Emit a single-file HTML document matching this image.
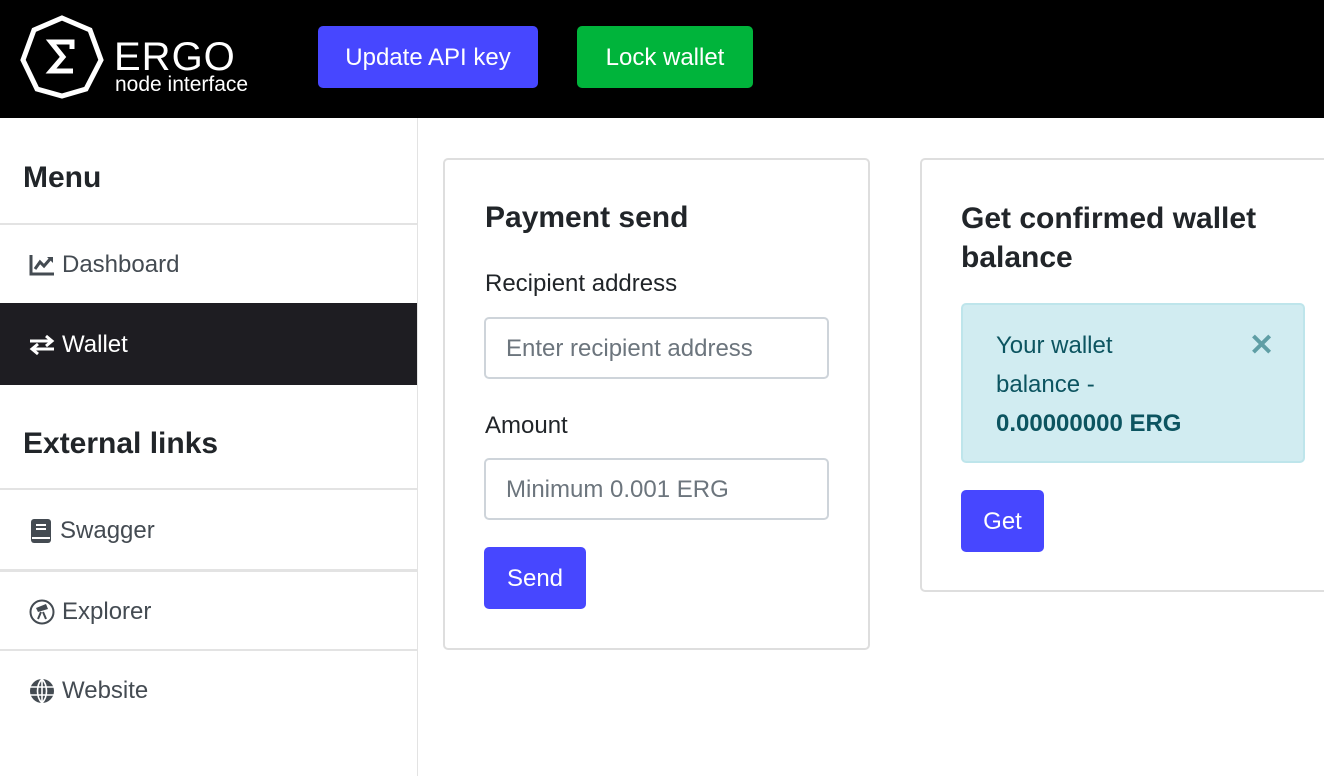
<!DOCTYPE html>
<html><head><meta charset="utf-8"><style>
*{box-sizing:border-box;margin:0;padding:0}
body{width:1324px;height:776px;overflow:hidden;background:#fff;font-family:"Liberation Sans",sans-serif;color:#212529;position:relative}
.a{position:absolute;white-space:nowrap}
.hdr{position:absolute;left:0;top:0;width:1324px;height:118px;background:#000}
.btn{position:absolute;color:#fff;font-size:24px;border-radius:5px;display:flex;align-items:center;justify-content:center;padding-top:2px}
.blue{background:#4747ff}
.side{position:absolute;left:0;top:118px;width:418px;height:658px;border-right:1px solid #e3e3e3}
.hr{position:absolute;left:0;width:417px;height:2px;background:#e3e3e3}
.nav{position:absolute;left:0;width:417px;font-size:24px;color:#444b52;display:flex;align-items:center;padding-left:28px;padding-top:2px}
.nav svg{margin-right:6px}
h2{position:absolute;font-size:30px;font-weight:bold;white-space:nowrap}
.card{position:absolute;border:2px solid #dedede;border-radius:5px}
.lbl{position:absolute;font-size:24px}
.inp{position:absolute;border:2px solid #ced4da;border-radius:5px;font-size:24px;color:#6c757d;padding-left:20px;display:flex;align-items:center;padding-top:2px}
</style></head><body>
<div class="hdr">
<svg class="a" style="left:20px;top:15px" width="84" height="84" viewBox="0 0 84 84"><polygon points="42,3 70,15 81,45 66,74 42,81 17,74 3,45 14,15" fill="none" stroke="#fff" stroke-width="5"/><path d="M52 34V27H31L43 42L31 56H53" fill="none" stroke="#fff" stroke-width="5" stroke-linejoin="miter"/></svg>
<div class="a" style="left:114px;top:35px;font-size:40px;color:#fff;letter-spacing:1px;line-height:44px">ERGO</div>
<div class="a" style="left:115px;top:73px;font-size:21px;color:#fff">node interface</div>
<div class="btn blue" style="left:318px;top:26px;width:220px;height:62px">Update API key</div>
<div class="btn" style="left:577px;top:26px;width:176px;height:62px;background:#00b43b">Lock wallet</div>
</div>
<div class="side">
<h2 style="left:23px;top:43px">Menu</h2>
<div class="hr" style="top:105px"></div>
<div class="nav" style="top:106px;height:79px"><svg width="28" height="24" viewBox="0 0 28 24"><path d="M3 2V21H26" fill="none" stroke="#444b52" stroke-width="3"/><path d="M7 16L12 9L16 13L23 5" fill="none" stroke="#444b52" stroke-width="3"/><path d="M19 4H25V10Z" fill="#444b52"/></svg>Dashboard</div>
<div class="nav" style="top:185px;height:82px;background:#1e1d22;color:#fff"><svg width="28" height="24" viewBox="0 0 28 24"><path d="M2 8H23M18 3L24 8L18 13M26 16H5M10 11L4 16L10 21" fill="none" stroke="#fff" stroke-width="3"/></svg>Wallet</div>
<h2 style="left:23px;top:309px">External links</h2>
<div class="hr" style="top:370px"></div>
<div class="nav" style="top:372px;height:79px"><svg width="26" height="28" viewBox="0 0 26 28"><rect x="3" y="2" width="20" height="24" rx="3" fill="#444b52"/><path d="M8 8H18M8 12H18M4 21H22" stroke="#fff" stroke-width="2"/></svg>Swagger</div>
<div class="hr" style="top:451px;height:3px"></div>
<div class="nav" style="top:454px;height:77px"><svg width="28" height="28" viewBox="0 0 28 28"><circle cx="14" cy="14" r="11.5" fill="none" stroke="#444b52" stroke-width="2"/><path d="M8 10L18 6L20 11L10 14Z" fill="#444b52"/><path d="M13 14L10 21M15 14L18 21" stroke="#444b52" stroke-width="2"/></svg>Explorer</div>
<div class="hr" style="top:531px"></div>
<div class="nav" style="top:533px;height:78px"><svg width="28" height="28" viewBox="0 0 28 28"><circle cx="14" cy="14" r="12" fill="#444b52"/><path d="M2 10H26M2 18H26M14 2V26M14 2C8 8 8 20 14 26M14 2C20 8 20 20 14 26" fill="none" stroke="#fff" stroke-width="1.6"/></svg>Website</div>
</div>
<div class="card" style="left:443px;top:158px;width:427px;height:492px"></div>
<h2 style="left:485px;top:201px">Payment send</h2>
<div class="lbl" style="left:485px;top:270px">Recipient address</div>
<div class="inp" style="left:484px;top:317px;width:345px;height:62px">Enter recipient address</div>
<div class="lbl" style="left:485px;top:412px">Amount</div>
<div class="inp" style="left:484px;top:458px;width:345px;height:62px">Minimum 0.001 ERG</div>
<div class="btn blue" style="left:484px;top:547px;width:102px;height:62px">Send</div>
<div class="card" style="left:920px;top:158px;width:420px;height:434px"></div>
<h2 style="left:961px;top:199px;line-height:39px">Get confirmed wallet<br>balance</h2>
<div class="a" style="left:961px;top:303px;width:344px;height:160px;background:#d1ecf1;border:2px solid #bee5eb;border-radius:5px"></div>
<div class="a" style="left:996px;top:326px;font-size:24px;line-height:39px;color:#0c5460">Your wallet<br>balance -<br><b>0.00000000 ERG</b></div>
<div class="a" style="left:1249px;top:328px;font-size:30px;font-weight:bold;color:#5f9ea5">✕</div>
<div class="btn blue" style="left:961px;top:490px;width:83px;height:62px">Get</div>
</body></html>
